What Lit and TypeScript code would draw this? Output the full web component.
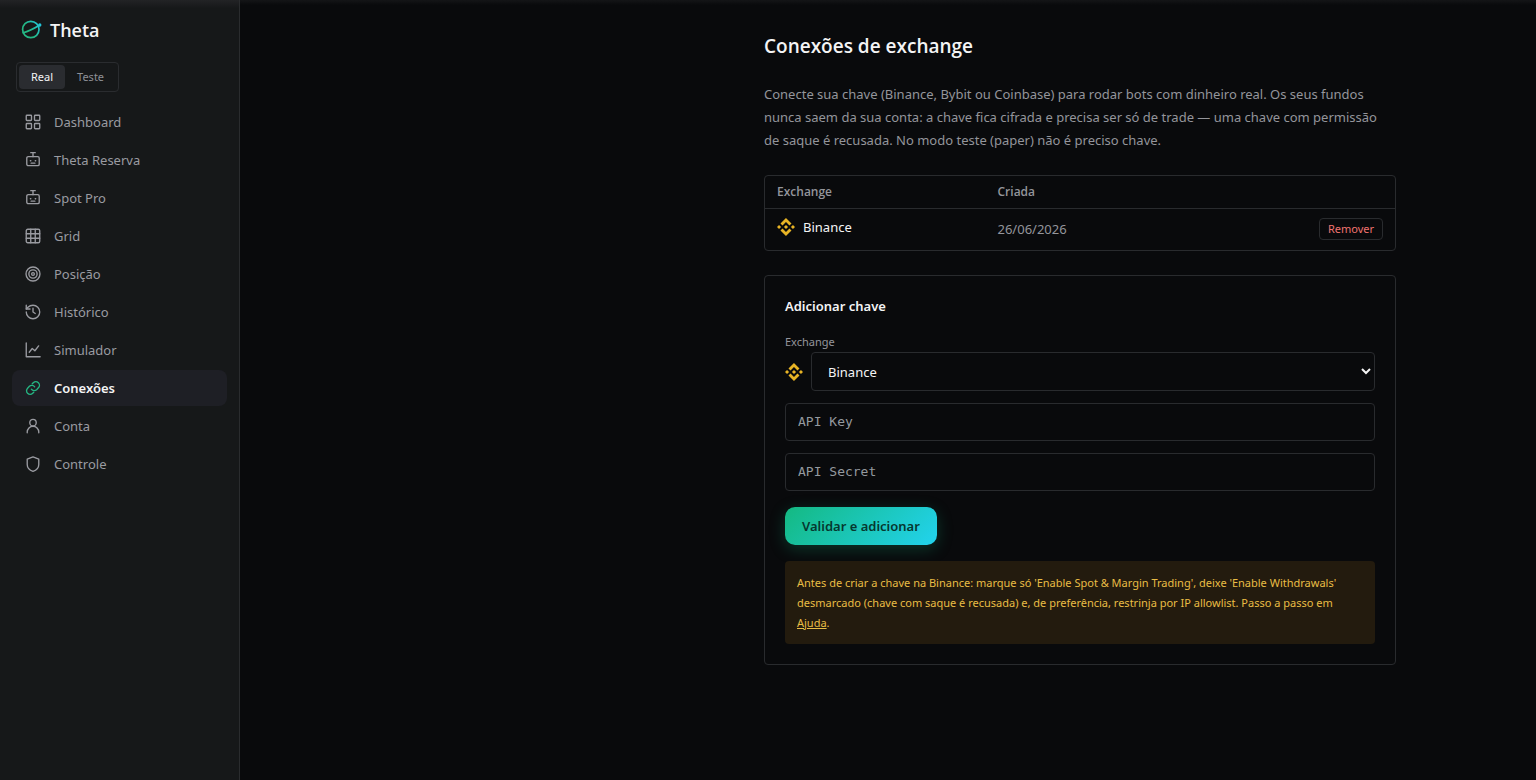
import { LitElement, html, css, svg, nothing } from "lit";
import { customElement, state } from "lit/decorators.js";
import { classMap } from "lit/directives/class-map.js";

const robot = svg`<rect x="3.700" y="7.500" width="16.600" height="12" rx="2"/><path d="M12 7.500V2.500M9 2.200h6M8.500 13h.6M15 13h.6M9.500 16.200h5"/>`;

const icons = {
  dashboard: svg`<rect x="3" y="3" width="7" height="7" rx="1"/><rect x="14" y="3" width="7" height="7" rx="1"/><rect x="14" y="14" width="7" height="7" rx="1"/><rect x="3" y="14" width="7" height="7" rx="1"/>`,
  robot,
  grid: svg`<rect x="3" y="3" width="18" height="18" rx="2"/><path d="M3 9h18M3 15h18M9 3v18M15 3v18"/>`,
  target: svg`<circle cx="12" cy="12" r="9.300"/><circle cx="12" cy="12" r="5.500"/><circle cx="12" cy="12" r="1.800"/>`,
  history: svg`<path d="M3 12a9 9 0 1 0 9-9 9.750 9.750 0 0 0-6.740 2.740L3 8"/><path d="M3 3v5h5M12 7v5l3 2"/>`,
  chart: svg`<path d="M3 2.500v18.500h18.500"/><path d="M7 15l4-5 3.500 3L19.500 6.500"/>`,
  link: svg`<path d="M9.800 13.600a4.700 4.700 0 0 0 7 .6l2.400-2.400a4.800 4.800 0 0 0-6.800-6.800L11 6.400"/><path d="M14.200 10.400a4.700 4.700 0 0 0-7-.6l-2.400 2.400a4.800 4.800 0 0 0 6.800 6.800l1.400-1.400"/>`,
  user: svg`<circle cx="12" cy="7.500" r="4.300"/><path d="M4.300 21v-1a7.700 7.700 0 0 1 15.400 0v1"/>`,
  shield: svg`<path d="M12 2.500L19.700 5.500v7c0 4.500-3 7.500-7.700 9.300-4.700-1.800-7.700-4.800-7.700-9.300v-7z"/>`,
};

const items: { label: string; icon: keyof typeof icons }[] = [
  { label: "Dashboard", icon: "dashboard" },
  { label: "Theta Reserva", icon: "robot" },
  { label: "Spot Pro", icon: "robot" },
  { label: "Grid", icon: "grid" },
  { label: "Posição", icon: "target" },
  { label: "Histórico", icon: "history" },
  { label: "Simulador", icon: "chart" },
  { label: "Conexões", icon: "link" },
  { label: "Conta", icon: "user" },
  { label: "Controle", icon: "shield" },
];

const binanceMark = html`<svg class="coin" viewBox="0 0 24 24" aria-hidden="true">
  <path d="M16.624 13.920l2.717 2.716-7.353 7.353-7.353-7.352 2.717-2.717 4.636 4.660 4.636-4.660zm4.637-4.636L24 12l-2.715 2.716L18.568 12l2.693-2.716zm-9.272 0l2.716 2.692-2.717 2.717L9.272 12l2.716-2.715zm-9.273 0L5.410 12l-2.692 2.692L0 12l2.716-2.716zM11.990.010l7.353 7.330-2.717 2.715-4.636-4.636-4.636 4.660-2.717-2.716L11.989.011z"/>
</svg>`;

@customElement("theta-sidebar")
export class ThetaSidebar extends LitElement {
  @state() private mode = "Real";
  @state() private current = "Conexões";

  static styles = css`
    :host {
      display: block;
      box-sizing: border-box;
      flex: 0 0 240px;
      padding: 16px 12px;
      border-right: 1px solid #2a2c2e;
      background: linear-gradient(#222325, #161819 8px);
    }
    .brand {
      display: flex;
      align-items: center;
      gap: 8px;
      height: 28px;
      padding: 0 9px;
      color: #f4f4f5;
      font-family: "Segoe UI", "Open Sans", sans-serif;
      font-size: 18px;
      font-weight: 600;
      text-decoration: none;
    }
    .logo {
      width: 21px;
      height: 21px;
    }
    .modes {
      display: inline-flex;
      margin: 18px 4px 12px;
      padding: 2px;
      border: 1px solid #2a2c2f;
      border-radius: 4px;
    }
    .mode {
      height: 24px;
      padding: 0 12px;
      border: 0;
      border-radius: 4px;
      background: none;
      color: #8e9096;
      font: inherit;
      font-size: 11px;
    }
    .mode.on {
      background: #2a2c30;
      color: #f4f4f5;
    }
    .nav {
      display: flex;
      flex-direction: column;
      gap: 2px;
    }
    .item {
      display: flex;
      align-items: center;
      gap: 12px;
      height: 36px;
      padding: 0 12px;
      border-radius: 8px;
      color: #9a9ba1;
      font-size: 13px;
      text-decoration: none;
    }
    .item.on {
      background: #1e1f25;
      color: #f4f4f5;
      font-weight: 600;
    }
    .icon {
      width: 18px;
      height: 18px;
      fill: none;
      stroke: currentColor;
      stroke-width: 1.8;
      stroke-linecap: round;
      stroke-linejoin: round;
    }
    .item.on .icon {
      stroke: #25b583;
    }
  `;

  render() {
    return html`
      <a class="brand" href="#">
        <svg class="logo" viewBox="0 0 21 21" fill="none" stroke="url(#brand)" stroke-width="1.700" stroke-linecap="round" aria-hidden="true">
          <defs>
            <linearGradient id="brand" gradientUnits="userSpaceOnUse" x1="2" y1="16" x2="20" y2="4">
              <stop offset="0.4" stop-color="#24b885" />
              <stop offset="1" stop-color="#22c5df" />
            </linearGradient>
          </defs>
          <circle cx="9.800" cy="9.500" r="8.200" />
          <path d="M2.300 12.800C7 11.500 13 8.500 19 5" />
          <circle cx="18.800" cy="5" r="0.800" />
        </svg>
        Theta
      </a>
      <div class="modes" role="group" aria-label="Modo">
        ${["Real", "Teste"].map(
          (m) => html`<button
            type="button"
            class=${classMap({ mode: true, on: m === this.mode })}
            aria-pressed=${m === this.mode}
            @click=${() => (this.mode = m)}
          >${m}</button>`
        )}
      </div>
      <nav class="nav">
        ${items.map(
          (i) => html`<a
            href="#"
            class=${classMap({ item: true, on: i.label === this.current })}
            aria-current=${i.label === this.current ? "page" : nothing}
            @click=${() => (this.current = i.label)}
          ><svg class="icon" viewBox="0 0 24 24" aria-hidden="true">${icons[i.icon]}</svg>${i.label}</a>`
        )}
      </nav>
    `;
  }
}

@customElement("app-root")
export class AppRoot extends LitElement {
  static styles = css`
    :host {
      display: flex;
      min-height: 100vh;
      background: #090a0c;
      color: #f4f4f5;
      color-scheme: dark;
      font-family: "Segoe UI", "Noto Sans", "Open Sans", sans-serif;
      font-size: 13px;
      line-height: 20px;
    }
    .main {
      flex: 1;
      min-width: 0;
      background: linear-gradient(#141517, #090a0c 5px);
    }
    .shell {
      display: flex;
      justify-content: flex-end;
      max-width: 1064px;
      margin: 0 auto;
    }
    .page {
      box-sizing: border-box;
      width: 100%;
      max-width: 680px;
      padding: 32px 24px;
    }
    .title {
      margin: 0;
      font-family: "Segoe UI", "Open Sans", sans-serif;
      font-size: 19px;
      font-weight: 600;
      line-height: 28px;
    }
    .intro {
      margin: 23px 0;
      padding-right: 8px;
      color: #94959b;
      line-height: 23px;
    }
    .panel {
      border: 1px solid #292b2e;
      border-radius: 4px;
    }
    .table {
      width: 100%;
      border-spacing: 0;
      table-layout: fixed;
    }
    .table th {
      height: 32px;
      padding: 0 12px;
      border-bottom: 1px solid #292b2e;
      color: #94959b;
      font-family: "Segoe UI", "Open Sans", sans-serif;
      font-size: 12px;
      font-weight: 600;
      text-align: left;
    }
    .table td {
      height: 39px;
      padding: 0 12px 2px;
      color: #94959b;
    }
    .name-col {
      width: 35%;
    }
    .table .action {
      text-align: right;
    }
    .name {
      display: flex;
      align-items: center;
      gap: 8px;
      padding-bottom: 4px;
      color: #f4f4f5;
    }
    .coin {
      flex: none;
      width: 18px;
      height: 18px;
      fill: #e8b425;
    }
    .remove {
      height: 22px;
      padding: 0 8px;
      border: 1px solid #292b2e;
      border-radius: 4px;
      background: none;
      color: #f07470;
      font: inherit;
      font-size: 11px;
      line-height: 20px;
    }
    .form {
      display: flex;
      flex-direction: column;
      gap: 12px;
      margin-top: 24px;
      padding: 20px;
    }
    .heading {
      margin: 0;
      font-size: 13px;
      font-weight: 600;
    }
    .field {
      margin-top: 4px;
    }
    .label {
      display: block;
      color: #94959b;
      font-size: 11px;
    }
    .pick {
      display: flex;
      align-items: center;
      gap: 8px;
    }
    .control {
      box-sizing: border-box;
      width: 100%;
      height: 38px;
      padding: 0 12px;
      border: 1px solid #292b2e;
      border-radius: 4px;
      background: #090a0c;
      color: #f4f4f5;
      font: inherit;
    }
    .select {
      height: 39px;
    }
    .secret {
      padding-bottom: 2px;
      font-family: Consolas, "DejaVu Sans Mono", monospace;
    }
    .secret::placeholder {
      color: #94999f;
    }
    .submit {
      align-self: flex-start;
      height: 38px;
      margin: 4px 0;
      padding: 0 17px;
      border: 0;
      border-radius: 10px;
      background: linear-gradient(135deg, #14b981, #22d3ee);
      box-shadow: 0 4px 16px rgb(16 185 129 / 25%);
      color: #06382f;
      font: inherit;
      font-weight: 600;
    }
    .note {
      margin: 0;
      padding: 12px 12px 11px;
      border-radius: 4px;
      background: #231b0e;
      color: #e9bd45;
      font-size: 11px;
    }
    .note a {
      color: inherit;
    }
  `;

  render() {
    return html`
      <theta-sidebar></theta-sidebar>
      <main class="main">
        <div class="shell">
          <div class="page">
            <h1 class="title">Conexões de exchange</h1>
            <p class="intro">
              Conecte sua chave (Binance, Bybit ou Coinbase) para rodar bots com dinheiro real. Os seus fundos
              nunca saem da sua conta: a chave fica cifrada e precisa ser só de trade — uma chave com permissão
              de saque é recusada. No modo teste (paper) não é preciso chave.
            </p>
            <div class="panel">
              <table class="table">
                <colgroup>
                  <col class="name-col" />
                  <col />
                  <col />
                </colgroup>
                <thead>
                  <tr><th>Exchange</th><th>Criada</th><th></th></tr>
                </thead>
                <tbody>
                  <tr>
                    <td><div class="name">${binanceMark}Binance</div></td>
                    <td>26/06/2026</td>
                    <td class="action"><button type="button" class="remove">Remover</button></td>
                  </tr>
                </tbody>
              </table>
            </div>
            <form class="panel form" @submit=${(e: Event) => e.preventDefault()}>
              <h2 class="heading">Adicionar chave</h2>
              <div class="field">
                <label class="label" for="exchange">Exchange</label>
                <div class="pick">
                  ${binanceMark}
                  <select class="control select" id="exchange">
                    <option>Binance</option>
                    <option>Bybit</option>
                    <option>Coinbase</option>
                  </select>
                </div>
              </div>
              <input class="control secret" type="text" placeholder="API Key" aria-label="API Key" />
              <input class="control secret" type="password" placeholder="API Secret" aria-label="API Secret" />
              <button class="submit" type="submit">Validar e adicionar</button>
              <p class="note">
                Antes de criar a chave na Binance: marque só 'Enable Spot &amp; Margin Trading', deixe 'Enable Withdrawals'
                desmarcado (chave com saque é recusada) e, de preferência, restrinja por IP allowlist. Passo a passo em
                <a href="#">Ajuda</a>.
              </p>
            </form>
          </div>
        </div>
      </main>
    `;
  }
}
